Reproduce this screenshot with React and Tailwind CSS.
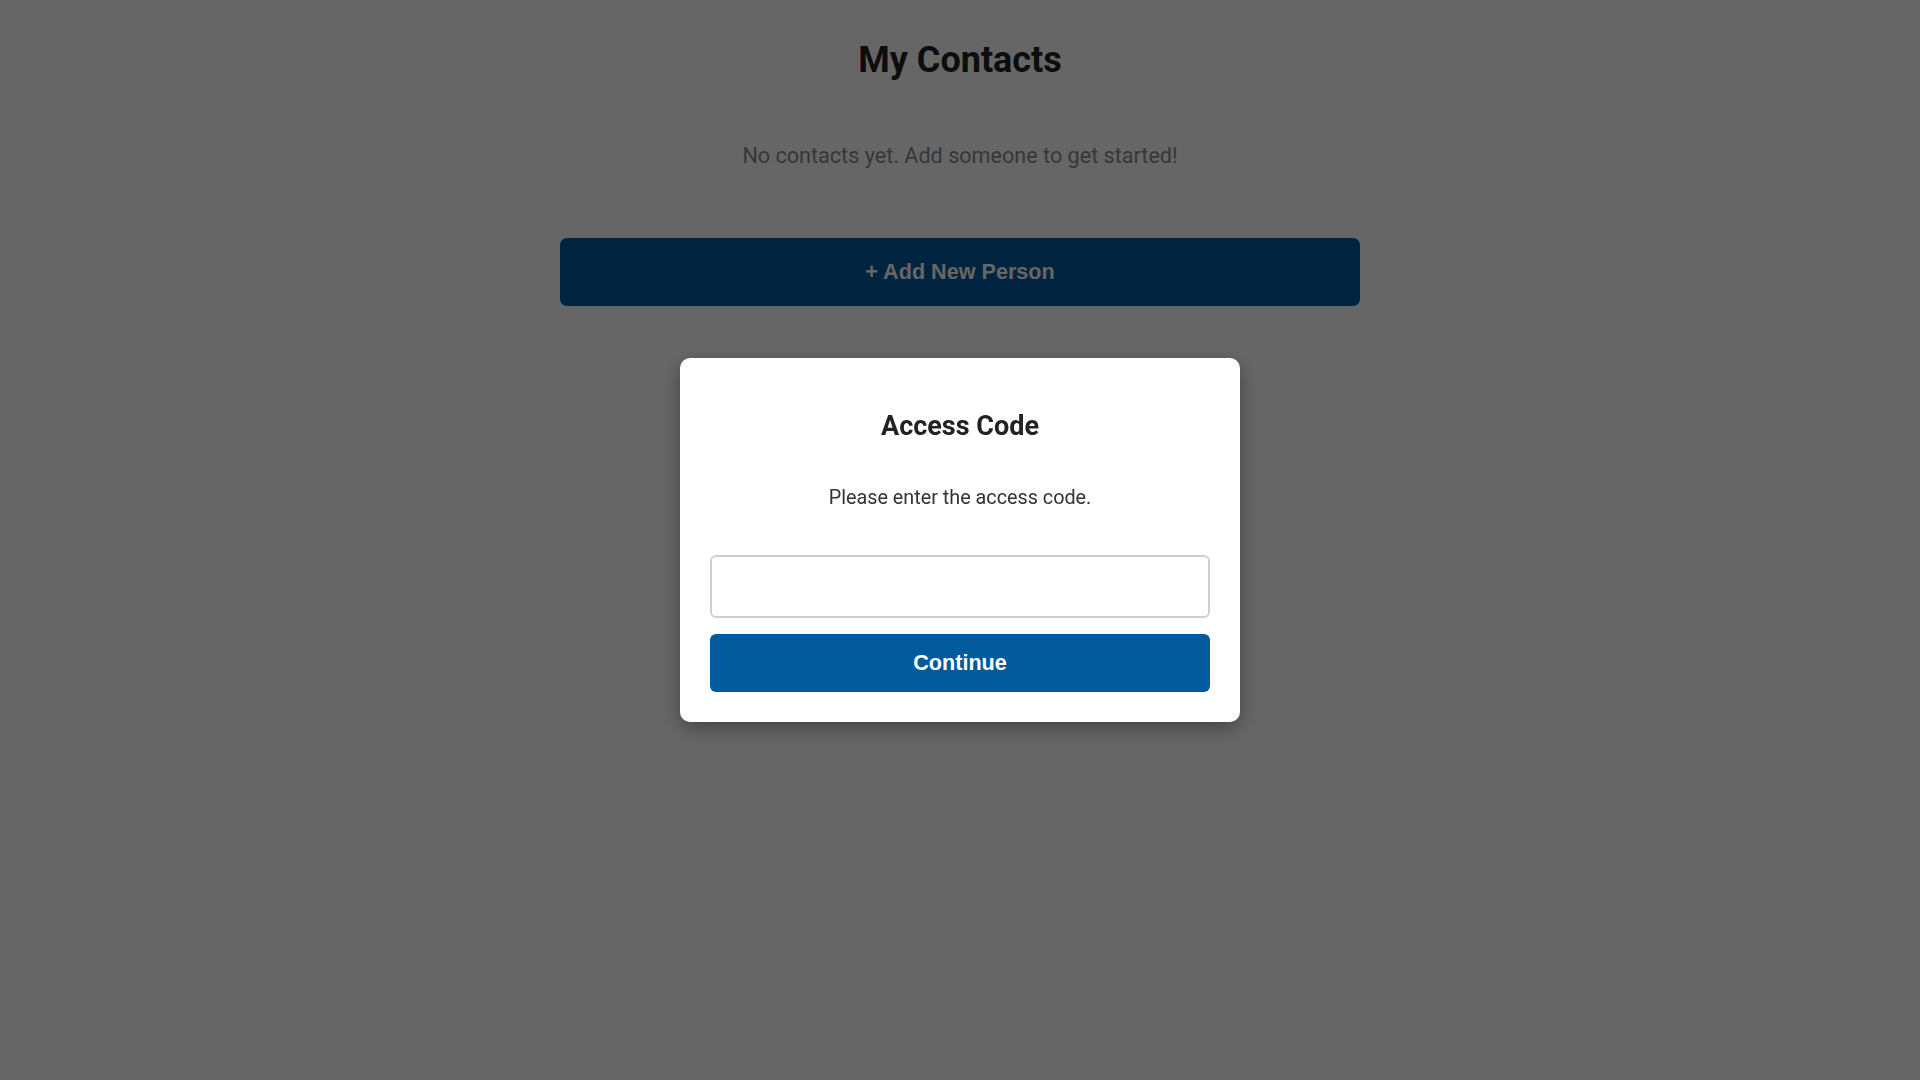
import React, { useState } from 'react';

export default function App() {
  const [code, setCode] = useState('');

  return (
    <div className="min-h-screen bg-white relative font-['Roboto',sans-serif]">
      {/* PAGE */}
      <div className="max-w-[800px] mx-auto pt-[38px] flex flex-col items-center">
        <h1 className="text-[36px] leading-[44px] font-bold text-[#222]">My Contacts</h1>
        <p className="mt-[58px] text-[21.6px] leading-[32px] text-[#868a90]">
          No contacts yet. Add someone to get started!
        </p>
        <button className="mt-[66px] w-full h-[68px] rounded-[7px] bg-[#005a9e] text-white text-[21.6px] font-bold font-['Liberation_Sans',Arial,sans-serif]">
          + Add New Person
        </button>
      </div>

      {/* ACCESS CODE MODAL */}
      <div className="fixed inset-0 bg-[rgba(0,0,0,0.6)] flex items-center justify-center">
        <div className="w-[560px] bg-white rounded-[10px] p-[30px] flex flex-col shadow-[0_6px_20px_rgba(0,0,0,0.35)]">
          <h2 className="mt-[22px] text-[27px] leading-[32px] font-bold text-[#222] text-center">Access Code</h2>
          <p className="mt-[42px] text-[19.8px] leading-[28px] text-[#333] text-center">Please enter the access code.</p>
          <input
            type="password"
            value={code}
            onChange={(e) => setCode(e.target.value)}
            className="mt-[43px] h-[63px] w-full border-2 border-[#ccd0d6] rounded-[6px] px-4 text-[18px] outline-none"
          />
          <button className="mt-[16px] h-[58px] w-full rounded-[6px] bg-[#005a9c] text-white text-[21.6px] font-bold font-['Liberation_Sans',Arial,sans-serif]">
            Continue
          </button>
        </div>
      </div>
    </div>
  );
}
